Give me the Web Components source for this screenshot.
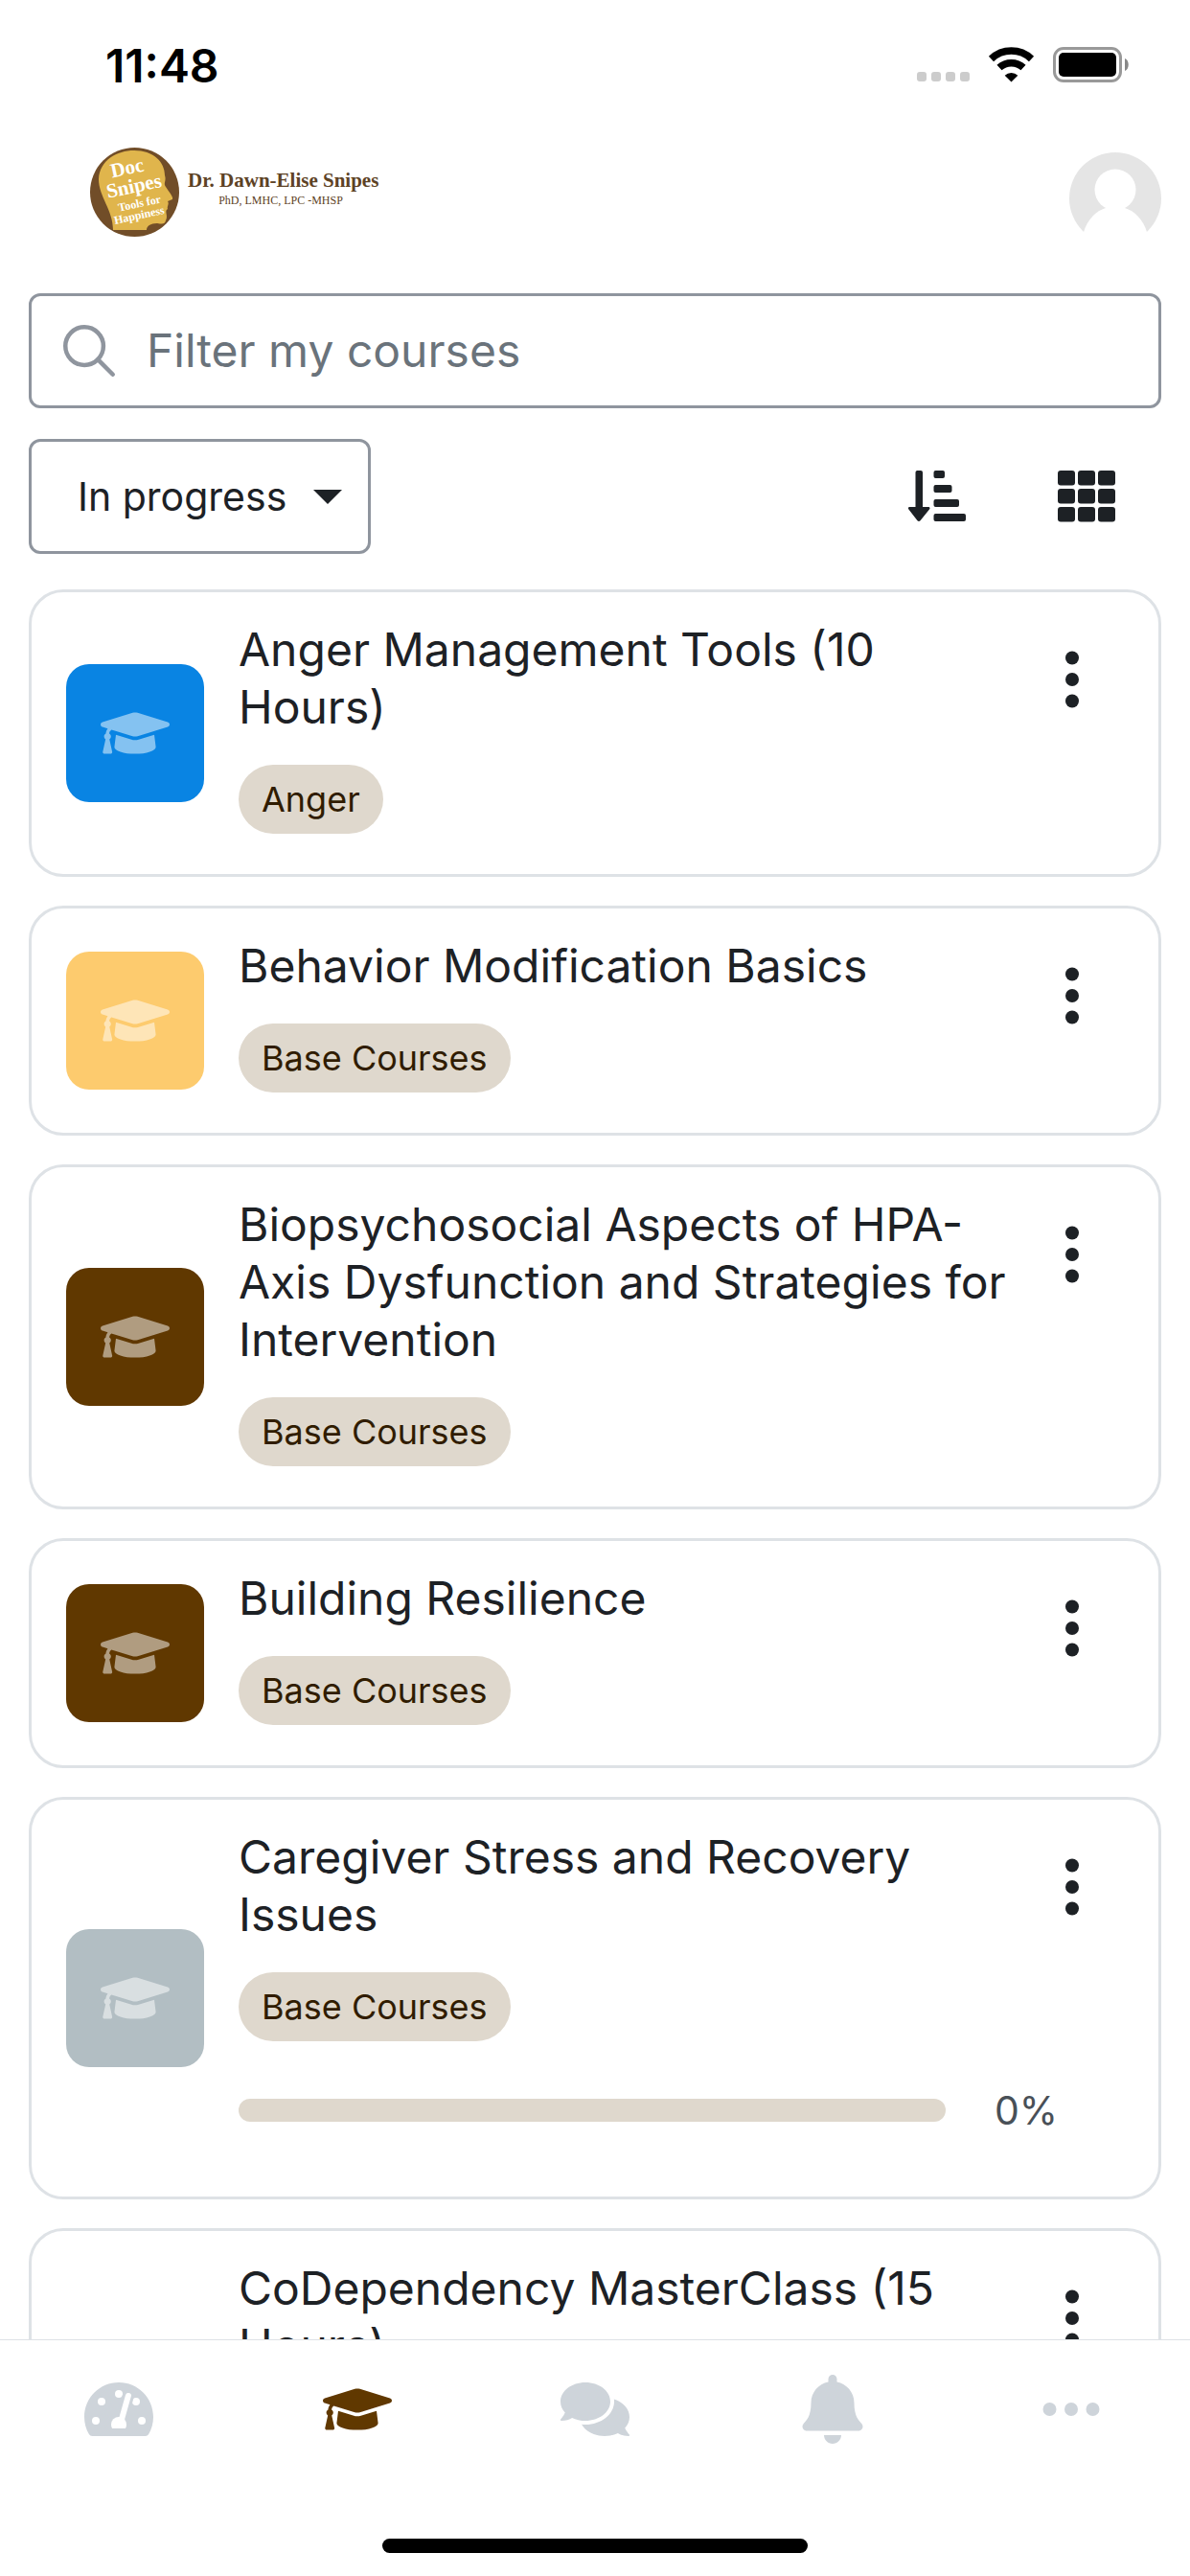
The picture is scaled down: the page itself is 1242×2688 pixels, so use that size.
<!DOCTYPE html>
<html lang="en">
<head>
<meta charset="utf-8">
<meta name="viewport" content="width=device-width, initial-scale=1">
<title>My courses</title>
<style>
    html, body {
        margin: 0;
        height: 100%;
    }

    body {
        --text: #1d2125;
        --muted: #8f959e;
        --line: #dee2e6;
        --brand: #603800;
        --brand-soft: #dfd8cd;
        --tab: #ced4da;
        background: #fff;
        color: var(--text);
        font-family: Inter, "Liberation Sans", sans-serif;
    }
</style>
</head>
<body>

<courses-app>
    <status-bar slot="top" time="11:48"></status-bar>
    <app-header slot="top"></app-header>

    <course-filter></course-filter>
    <course-card color="#0984e3">
        Anger Management Tools (10 Hours)
        <span slot="category">Anger</span>
    </course-card>
    <course-card color="#fdcb6e">
        Behavior Modification Basics
        <span slot="category">Base Courses</span>
    </course-card>
    <course-card color="#603800">
        Biopsychosocial Aspects of HPA-Axis Dysfunction and Strategies for Intervention
        <span slot="category">Base Courses</span>
    </course-card>
    <course-card color="#603800">
        Building Resilience
        <span slot="category">Base Courses</span>
    </course-card>
    <course-card color="#b2bec3" progress="0">
        Caregiver Stress and Recovery Issues
        <span slot="category">Base Courses</span>
    </course-card>
    <course-card color="#b2bec3" progress="0">
        CoDependency MasterClass (15 Hours)
        <span slot="category">Base Courses</span>
    </course-card>

    <tab-bar slot="bottom"></tab-bar>
</courses-app>

<script>
const ICONS = {
    cap: ['0 0 640 512', '<path d="M622.34 153.2L343.4 67.5c-15.2-4.67-31.6-4.67-46.79 0L17.66 153.2c-23.54 7.23-23.54 38.36 0 45.59l48.63 14.94c-10.67 13.19-17.23 29.28-17.88 46.9C38.78 266.15 32 276.11 32 288c0 10.78 5.68 19.85 13.86 25.65L20.33 428.53C18.11 438.52 25.71 448 35.94 448h56.11c10.24 0 17.84-9.48 15.62-19.47L82.14 313.65C90.32 307.85 96 298.78 96 288c0-11.57-6.47-21.25-15.66-26.87.76-15.02 8.44-28.3 20.69-36.72L296.6 284.5c9.06 2.78 26.44 6.25 46.79 0l278.95-85.7c23.55-7.24 23.55-38.36 0-45.6zM352.79 315.09c-28.53 8.76-52.84 3.92-65.59 0l-145.02-44.55L128 384c0 35.35 85.96 64 192 64s192-28.65 192-64l-14.18-113.47-145.03 44.56z"/>'],
    gauge: ['0 0 576 512', `<path d="M288 32C128.94 32 0 160.94 0 320c0 52.8 14.25 102.26 39.06 144.8 5.61 9.62 16.3 15.2 27.44 15.2h443c11.14 0 21.83-5.58 27.44-15.2C561.75 422.26 576 372.8 576 320c0-159.06-128.94-288-288-288z"/>
        <g fill="#fff"><circle cx="288" cy="128" r="32"/><circle cx="144" cy="192" r="32"/><circle cx="432" cy="192" r="32"/><circle cx="96" cy="352" r="32"/><circle cx="480" cy="352" r="32"/></g>
        <path d="M310 345L367 144" stroke="currentColor" stroke-width="96" stroke-linecap="round"/>
        <path d="M310 345L367 144" stroke="#fff" stroke-width="48" stroke-linecap="round"/>
        <path fill="#fff" d="M288 320a64 64 0 0 1 64 64c0 12-3 23-9 32H233c-6-9-9-20-9-32a64 64 0 0 1 64-64z"/>`],
    comments: ['0 0 576 512', '<path d="M416 192c0-88.4-93.1-160-208-160S0 103.6 0 192c0 34.3 14.1 65.9 38 92-13.4 30.2-35.5 54.2-35.8 54.5-2.2 2.3-2.8 5.7-1.5 8.7S4.8 352 8 352c36.6 0 66.9-12.3 88.7-25 32.2 15.7 70.3 25 111.3 25 114.9 0 208-71.6 208-160zm122 220c23.9-26 38-57.7 38-92 0-66.9-53.5-124.2-129.3-148.1.9 6.6 1.3 13.3 1.3 20.1 0 105.9-107.7 192-240 192-10.8 0-21.3-.8-31.7-1.9C207.8 439.6 281.8 480 368 480c41 0 79.1-9.2 111.3-25 21.8 12.7 52.1 25 88.7 25 3.2 0 6.1-1.9 7.3-4.8 1.3-2.9.7-6.3-1.5-8.7-.3-.3-22.4-24.2-35.8-54.5z"/>'],
    bell: ['0 0 448 512', '<path d="M224 512c35.32 0 63.97-28.65 63.97-64H160.03c0 35.35 28.65 64 63.97 64zm215.39-149.71c-19.32-20.76-55.47-51.99-55.47-154.29 0-77.7-54.48-139.9-127.94-155.16V32c0-17.67-14.32-32-31.98-32s-31.98 14.33-31.98 32v20.84C118.56 68.1 64.08 130.3 64.08 208c0 102.3-36.15 133.53-55.47 154.29-6 6.45-8.66 14.16-8.61 21.71.11 16.4 12.98 32 32.1 32h383.8c19.12 0 32-15.6 32.1-32 .05-7.55-2.61-15.27-8.61-21.71z"/>'],
    more: ['0 0 72 72', '<circle cx="13.5" cy="36" r="7"/><circle cx="36" cy="36" r="7"/><circle cx="58.5" cy="36" r="7"/>'],
    kebab: ['0 0 72 72', '<circle cx="36" cy="13.5" r="7"/><circle cx="36" cy="36" r="7"/><circle cx="36" cy="58.5" r="7"/>'],
    search: ['0 0 512 512', '<g fill="none" stroke="currentColor" stroke-width="32"><circle cx="221" cy="221" r="141"/><path stroke-linecap="round" d="M321 321l111 111"/></g>'],
    sort: ['0 0 60 54', `<path d="M9 0h4a2 2 0 0 1 2 2v36h6c1.5 0 2 1.5 1 2.5l-9.5 11.8c-.8 1-2.2 1-3 0L.4 40.5C-.5 39.5 0 38 1.5 38h6V2A2 2 0 0 1 9 0z"/>
        <rect x="26.5" width="11.5" height="8" rx="2"/><rect x="26.5" y="15" width="19" height="8" rx="2"/><rect x="26.5" y="30" width="26.5" height="8" rx="2"/><rect x="26.5" y="45" width="33.5" height="8" rx="2"/>`],
    grid: ['0 0 60 54', [0, 19, 38].map(y => [0, 21, 42].map(x => `<rect x="${x}" y="${y}" width="18" height="15.5" rx="3"/>`).join('')).join('')],
    caret: ['0 0 30 15', '<path d="M0 0h30L15 15z"/>'],
};

const icon = name => `<svg class="${name}" viewBox="${ICONS[name][0]}" fill="currentColor" aria-hidden="true">${ICONS[name][1]}</svg>`;

class BaseElement extends HTMLElement {
    constructor() {
        super();
        this._shadowRoot = this.attachShadow({ mode: 'open' });
        const template = document.createElement('template');
        template.innerHTML = this.render();
        this._shadowRoot.appendChild(template.content.cloneNode(true));
    }
}

class CoursesApp extends BaseElement {
    render() {
        return `
            <style>
                :host {
                    display: flex;
                    flex-direction: column;
                    height: 100%;
                }

                main {
                    flex: 1;
                    min-height: 0;
                    overflow: hidden auto;
                    scrollbar-width: none;
                    display: flex;
                    flex-direction: column;
                    gap: 30px;
                    padding: 0 30px;
                }

                ::slotted(course-card) {
                    flex: none;
                }
            </style>
            <slot name="top"></slot>
            <main><slot></slot></main>
            <slot name="bottom"></slot>
        `;
    }
}

class StatusBar extends BaseElement {
    render() {
        return `
            <style>
                :host {
                    flex: none;
                    display: flex;
                    align-items: center;
                    justify-content: space-between;
                    height: 136px;
                    padding: 0 63px 0 110px;
                    color: #000;
                    font-size: 48px;
                    font-weight: 600;
                }

                svg {
                    display: block;
                    width: 222px;
                    height: 38px;
                }
            </style>
            <time></time>
            <svg viewBox="0 0 222 38" role="img" aria-label="Wi-Fi on, battery full">
                <g fill="#ccc">
                    <rect y="26" width="10" height="10" rx="3"/><rect x="15" y="26" width="10" height="10" rx="3"/>
                    <rect x="30" y="26" width="10" height="10" rx="3"/><rect x="45" y="26" width="10" height="10" rx="3"/>
                </g>
                <g fill="none" stroke="#000" stroke-width="7.5">
                    <path d="M77.5 12.5a30.5 30.5 0 0 1 42 0"/>
                    <path d="M86 21.5a18.5 18.5 0 0 1 25 0"/>
                </g>
                <path d="M98.5 36.5l-6.8-6.8a10 10 0 0 1 13.6 0z"/>
                <rect x="143.5" y="1.5" width="69" height="34" rx="9.5" fill="none" stroke="#999" stroke-width="3"/>
                <rect x="148" y="6" width="60" height="25" rx="5"/>
                <path fill="#888" d="M217 12c5 2 5 11 0 13z"/>
            </svg>
        `;
    }

    connectedCallback() {
        this._shadowRoot.querySelector('time').textContent = this.getAttribute('time');
    }
}

class AppHeader extends BaseElement {
    render() {
        return `
            <style>
                :host {
                    flex: none;
                    display: flex;
                    align-items: center;
                    justify-content: space-between;
                    height: 142px;
                    padding: 0 30px 28px 94px;
                }

                a, svg {
                    display: block;
                }

                .logo {
                    width: 304px;
                    height: 108px;
                }

                text {
                    font-family: "Liberation Serif", serif;
                }

                .badge {
                    fill: #fff;
                    text-anchor: middle;
                }

                button {
                    padding: 0;
                    border: 0;
                    background: none;
                }

                .avatar {
                    width: 96px;
                    height: 96px;
                }
            </style>
            <a href="#home" aria-label="Home">
                <svg class="logo" viewBox="0 0 304 108">
                    <clipPath id="disc"><circle cx="46.5" cy="47.5" r="46.5"/></clipPath>
                    <g clip-path="url(#disc)">
                        <rect width="94" height="95" fill="#714d28"/>
                        <path fill="#e0b54c" d="M24 87C24 66 9 52 9 34C10 14 28 4 46 4C66 4 78 16 78 30C80 36 76 38 79 42C82 47 87 52 86 55L81 57C83 60 80 62 81 65C77 67 82 72 79 77C78 81 76 81 70 80C63 80 59 83 59 87z"/>
                    </g>
                    <g class="badge" transform="rotate(-12 46 47)">
                        <text x="44" y="28" font-size="21" font-weight="bold">Doc</text>
                        <text x="47" y="48" font-size="21" font-weight="bold">Snipes</text>
                        <text x="49" y="64" font-size="12" font-weight="bold">Tools for</text>
                        <text x="46" y="76" font-size="12" font-weight="bold">Happiness</text>
                    </g>
                    <text x="102" y="42" font-size="21" font-weight="bold" fill="#5d4225">Dr. Dawn-Elise Snipes</text>
                    <text x="199" y="60" font-size="12" text-anchor="middle" fill="#5d4225">PhD, LMHC, LPC -MHSP</text>
                </svg>
            </a>
            <button type="button" aria-label="User account">
                <svg class="avatar" viewBox="0 0 96 96">
                    <clipPath id="bust"><rect width="96" height="83"/></clipPath>
                    <g clip-path="url(#bust)">
                        <circle cx="48" cy="48" r="48" fill="#e5e5e5"/>
                        <circle cx="48" cy="39" r="21.5" fill="#fff"/>
                        <path fill="#fff" d="M15 83C19 70 28 61 38 58h20C68 61 77 70 81 83v13H15z"/>
                    </g>
                </svg>
            </button>
        `;
    }
}

class CourseFilter extends BaseElement {
    render() {
        return `
            <style>
                :host {
                    display: flex;
                    flex-direction: column;
                    gap: 32px;
                    flex: none;
                    padding-bottom: 7px;
                }

                .field, select {
                    box-sizing: border-box;
                    height: 120px;
                    border: 3px solid var(--muted);
                    border-radius: 12px;
                    background: #fff;
                }

                .field {
                    display: flex;
                    align-items: center;
                    gap: 24px;
                    padding: 0 24px;
                    color: var(--muted);
                }

                .field svg {
                    flex: none;
                    width: 72px;
                    height: 72px;
                }

                input {
                    flex: 1;
                    min-width: 0;
                    padding: 0;
                    border: 0;
                    outline: 0;
                    background: none;
                    font: 48px/60px Inter, sans-serif;
                }

                input::placeholder {
                    color: #6a737b;
                }

                .tools {
                    display: flex;
                    align-items: center;
                }

                .state {
                    display: grid;
                    align-items: center;
                    justify-items: end;
                    margin-right: auto;
                }

                .state > * {
                    grid-area: 1 / 1;
                }

                select {
                    appearance: none;
                    padding: 0 84px 0 48px;
                    color: var(--text);
                    font: 41px/60px Inter, sans-serif;
                }

                .caret {
                    width: 30px;
                    height: 15px;
                    margin-right: 30px;
                    pointer-events: none;
                }

                button {
                    display: grid;
                    place-items: center;
                    width: 156px;
                    height: 120px;
                    padding: 0;
                    border: 0;
                    background: none;
                    color: var(--text);
                }

                button svg {
                    width: 60px;
                    height: 54px;
                }
            </style>
            <div class="field">
                ${icon('search')}
                <input type="text" placeholder="Filter my courses" aria-label="Filter my courses">
            </div>
            <div class="tools">
                <div class="state">
                    <select aria-label="Course state"><option>In progress</option></select>
                    ${icon('caret')}
                </div>
                <button type="button" aria-label="Sort by">${icon('sort')}</button>
                <button type="button" aria-label="Show as grid">${icon('grid')}</button>
            </div>
        `;
    }
}

class CourseCard extends BaseElement {
    render() {
        return `
            <style>
                :host {
                    display: flex;
                    align-items: center;
                    gap: 36px;
                    border: 3px solid var(--line);
                    border-radius: 36px;
                    padding: 30px 45px 42px 36px;
                }

                .thumb {
                    flex: none;
                    display: grid;
                    place-items: center;
                    width: 144px;
                    height: 144px;
                    margin-top: 12px;
                    border-radius: 24px;
                    background: var(--thumb);
                    color: rgba(255, 255, 255, .5);
                }

                .thumb svg {
                    width: 72px;
                    height: 58px;
                }

                .content {
                    flex: 1;
                    min-width: 0;
                }

                .head {
                    display: flex;
                    align-items: flex-start;
                }

                .info {
                    flex: 1;
                    min-width: 0;
                    display: flex;
                    flex-direction: column;
                    align-items: flex-start;
                    gap: 30px;
                }

                a {
                    color: inherit;
                    font-size: 48px;
                    line-height: 60px;
                    text-decoration: none;
                }

                .category {
                    padding: 0 24px;
                    border-radius: 36px;
                    background: var(--brand-soft);
                    color: #301c00;
                    font-size: 36px;
                    line-height: 72px;
                }

                button {
                    flex: none;
                    display: grid;
                    place-items: center;
                    width: 90px;
                    height: 122px;
                    padding: 0;
                    border: 0;
                    background: none;
                    color: inherit;
                }

                button svg {
                    width: 72px;
                    height: 72px;
                }

                .completion {
                    display: flex;
                    align-items: center;
                    gap: 51px;
                    margin: 42px 60px 18px 0;
                    color: #495057;
                    font-size: 41px;
                    line-height: 60px;
                }

                .completion[hidden] {
                    display: none;
                }

                progress {
                    appearance: none;
                    flex: 1;
                    min-width: 0;
                    height: 24px;
                    border: 0;
                    border-radius: 12px;
                    overflow: hidden;
                }

                progress::-webkit-progress-bar {
                    background: var(--brand-soft);
                }

                progress::-webkit-progress-value {
                    background: var(--brand);
                }
            </style>
            <div class="thumb">${icon('cap')}</div>
            <div class="content">
                <div class="head">
                    <div class="info">
                        <a href="#course"><slot></slot></a>
                        <div class="category"><slot name="category"></slot></div>
                    </div>
                    <button type="button" aria-label="Course options">${icon('kebab')}</button>
                </div>
                <div class="completion" hidden>
                    <progress id="completion" max="100" value="0"></progress>
                    <label for="completion"></label>
                </div>
            </div>
        `;
    }

    connectedCallback() {
        this.style.setProperty('--thumb', this.getAttribute('color'));
        if (this.hasAttribute('progress')) {
            const value = this.getAttribute('progress');
            this._shadowRoot.querySelector('.completion').hidden = false;
            this._shadowRoot.querySelector('progress').value = value;
            this._shadowRoot.querySelector('label').textContent = value + '%';
        }
    }
}

class TabBar extends BaseElement {
    render() {
        return `
            <style>
                :host {
                    flex: none;
                    display: flex;
                    flex-direction: column;
                    align-items: center;
                    border-top: 1px solid var(--line);
                    padding-bottom: 24px;
                    background: #fff;
                }

                nav {
                    align-self: stretch;
                    display: grid;
                    grid-template-columns: repeat(5, 1fr);
                    margin-bottom: 63px;
                }

                a {
                    display: grid;
                    place-items: center;
                    height: 144px;
                    color: var(--tab);
                }

                a[aria-current] {
                    color: var(--brand);
                }

                svg {
                    width: 72px;
                    height: 72px;
                }

                .gauge, .comments {
                    height: 64px;
                }

                .cap {
                    height: 58px;
                }

                .indicator {
                    width: 444px;
                    height: 15px;
                    border-radius: 8px;
                    background: #000;
                }
            </style>
            <nav aria-label="Main">
                <a href="#dashboard" aria-label="Dashboard">${icon('gauge')}</a>
                <a href="#courses" aria-label="My courses" aria-current="page">${icon('cap')}</a>
                <a href="#messages" aria-label="Messages">${icon('comments')}</a>
                <a href="#notifications" aria-label="Notifications">${icon('bell')}</a>
                <a href="#more" aria-label="More">${icon('more')}</a>
            </nav>
            <div class="indicator"></div>
        `;
    }
}

customElements.define('courses-app', CoursesApp);
customElements.define('status-bar', StatusBar);
customElements.define('app-header', AppHeader);
customElements.define('course-filter', CourseFilter);
customElements.define('course-card', CourseCard);
customElements.define('tab-bar', TabBar);
</script>
</body>
</html>
